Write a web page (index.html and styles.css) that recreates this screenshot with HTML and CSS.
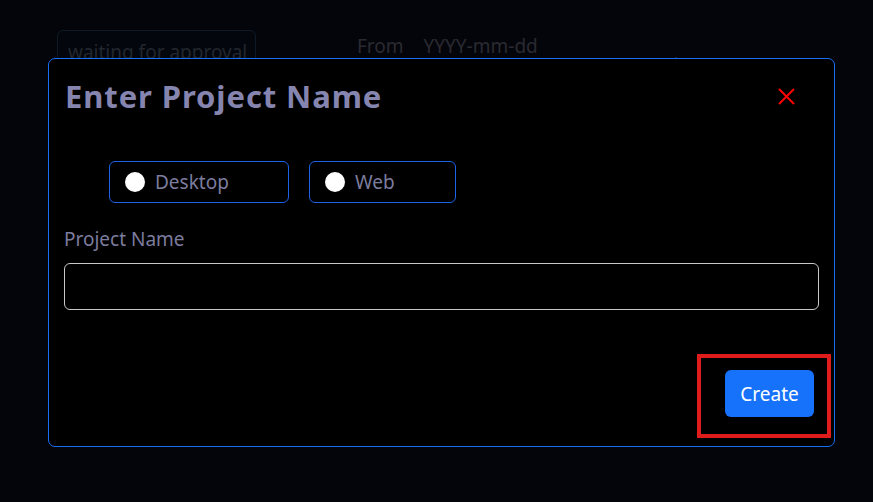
FILE: index.html
```html
<!DOCTYPE html>
<html>
<head>
<meta charset="utf-8">
<link rel="stylesheet" href="styles.css">
</head>
<body>
<div class="page">
  <div class="toolbar">
    <div class="status">waiting for approval</div>
    <div class="from"><span class="from-label">From</span><span class="from-val">YYYY-mm-dd</span></div>
    <div class="web">Web</div>
  </div>
</div>
<div class="modal">
  <div class="modal-header">
    <h1 class="title">Enter Project Name</h1>
    <button class="close" aria-label="close">
      <svg width="17" height="17" viewBox="0 0 17 17"><path d="M1 1L16 16M16 1L1 16" stroke="#ff0000" stroke-width="2"/></svg>
    </button>
  </div>
  <div class="radios">
    <label class="radio radio-desktop"><span class="dot"></span><span>Desktop</span></label>
    <label class="radio radio-web"><span class="dot"></span><span>Web</span></label>
  </div>
  <div class="field">
    <div class="label">Project Name</div>
    <div class="input"></div>
  </div>
  <div class="footer">
    <div class="highlight"><button class="create">Create</button></div>
  </div>
</div>
</body>
</html>
```
FILE: styles.css
```css
* { box-sizing: border-box; }
html, body { margin: 0; padding: 0; }
body {
  background: #04050b;
  width: 873px;
  height: 502px;
  overflow: hidden;
  font-family: "Noto Sans", "Open Sans", sans-serif;
  position: relative;
}
.toolbar {
  display: flex;
  align-items: flex-start;
  padding: 30px 0 0 57px;
}
.status {
  width: 199px;
  height: 50px;
  border: 1px solid #0e1a26;
  border-radius: 6px;
  background: #03070d;
  color: #22262e;
  font-size: 19px;
  padding: 8px 0 0 10px;
}
.from {
  margin-left: 101px;
  margin-top: 3px;
  color: #2a2a30;
  font-size: 19px;
  display: flex;
  gap: 20px;
}
.web {
  margin-left: 108px;
  margin-top: 22px;
  color: #2a2a30;
  font-size: 19px;
}
.modal {
  position: absolute;
  left: 48px;
  top: 58px;
  width: 787px;
  height: 389px;
  background: #000;
  border: 1px solid #1a6ef5;
  border-radius: 7px;
  display: flex;
  flex-direction: column;
}
.modal-header {
  display: flex;
  justify-content: space-between;
  align-items: center;
  padding: 16px 39px 0 16px;
}
.title {
  margin: 0;
  font-size: 31px;
  line-height: 42px;
  font-weight: 700;
  color: #8585b0;
  letter-spacing: 0.9px;
}
.close {
  background: none;
  border: 0;
  padding: 0;
  display: flex;
}
.radios {
  display: flex;
  gap: 20px;
  margin: 44px 0 0 60px;
}
.radio {
  height: 42px;
  border: 1px solid #1a62e6;
  border-radius: 6px;
  display: flex;
  align-items: center;
  padding-left: 15px;
  gap: 10px;
  color: #7c7c9e;
  font-size: 19px;
}
.radio-desktop { width: 180px; }
.radio-web { width: 147px; }
.dot {
  width: 20px;
  height: 20px;
  border-radius: 50%;
  background: #fff;
}
.field {
  padding: 0 15px 0 15px;
  margin-top: 23px;
}
.label {
  color: #7c7c9e;
  font-size: 19px;
  line-height: 26px;
}
.input {
  margin-top: 11px;
  height: 47px;
  border: 1px solid #c8c8c8;
  border-radius: 6px;
  background: #000;
}
.footer {
  display: flex;
  justify-content: flex-end;
  margin-top: 44px;
  padding-right: 3px;
}
.highlight {
  border: 4px solid #e01b1b;
  padding: 12px 13px 17px 24px;
}
.create {
  background: #1672fb;
  color: #fff;
  border: 0;
  border-radius: 6px;
  width: 89px;
  height: 47px;
  font-family: "Noto Sans", "Open Sans", sans-serif;
  font-size: 19px;
}
```
